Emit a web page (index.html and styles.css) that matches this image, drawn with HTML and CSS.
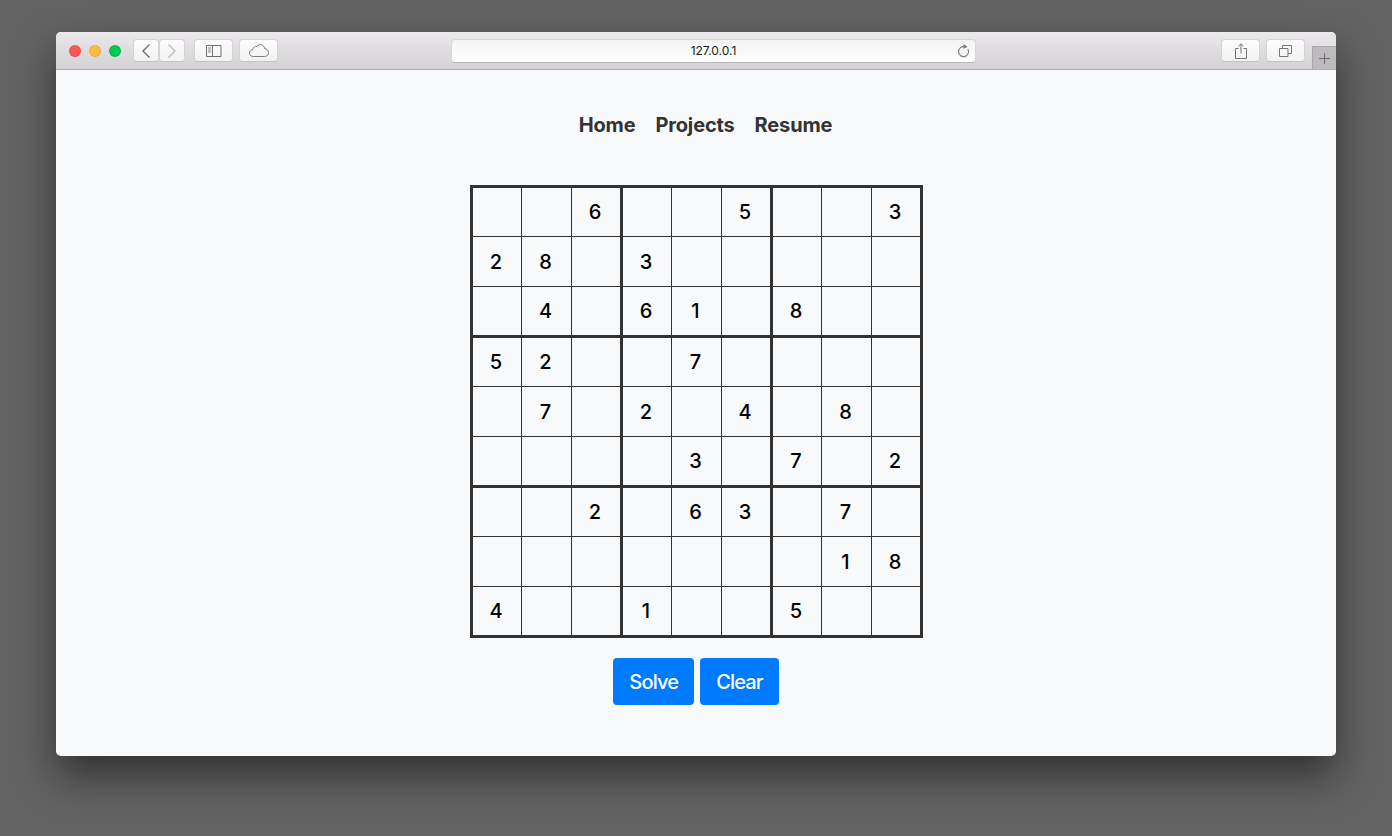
FILE: index.html
```html
<!DOCTYPE html>
<html lang="en">
<head>
  <meta charset="UTF-8" />
  <meta name="viewport" content="width=device-width, initial-scale=1" />
  <title>Sudoku Solver</title>
  <link rel="stylesheet" href="styles.css">
</head>
<body>
  <div class="window">
    <div class="titlebar">
      <div class="lights">
        <span class="light red"></span>
        <span class="light yellow"></span>
        <span class="light green"></span>
      </div>
      <div class="nav-pair">
        <span class="tool tool-nav">
          <svg width="10" height="16" viewBox="0 0 10 16"><path d="M8.500 1.500 2 8l6.500 6.500" fill="none" stroke="#6e6e6e" stroke-width="1.400"/></svg>
        </span>
        <span class="tool tool-nav">
          <svg width="10" height="16" viewBox="0 0 10 16"><path d="M1.500 1.500 8 8l-6.500 6.500" fill="none" stroke="#bdbdbd" stroke-width="1.400"/></svg>
        </span>
      </div>
      <span class="tool tool-wide sidebar-btn">
        <svg width="16" height="12" viewBox="0 0 16 12"><path d="M.5.5h14.500v11H.5zM6.500.5v11" fill="none" stroke="#6e6e6e"/><path d="M2 3h3M2 5h3M2 7h3" stroke="#8a8a8a"/></svg>
      </span>
      <span class="tool tool-wide cloud-btn">
        <svg width="20" height="13" viewBox="0 0 20 13"><path d="M4.500 12.500C2 12.500.5 11 .5 9.200c0-1.700 1.300-3 3-3.200C4 3.500 6 2 8 2.500 9.200.8 11 .2 12.700.8c1.700.6 2.700 2 2.800 3.700 2.300.3 4 2 4 4.100 0 2.200-1.700 3.900-4 3.900z" fill="none" stroke="#7a7a7a"/></svg>
      </span>
      <div class="address">
        <span class="address-text">127.0.0.1</span>
        <svg class="reload" width="13" height="14" viewBox="0 0 13 14"><path d="M10.800 5a5 5 0 1 1-3.300-2.300" fill="none" stroke="#7a7a7a" stroke-width="1.100"/><path d="M6.500 0l4 2.700-4 2.300z" fill="#7a7a7a"/></svg>
      </div>
      <span class="tool tool-right share-btn">
        <svg width="12" height="16" viewBox="0 0 12 16"><path d="M3.500 5.500H.5v10h11v-10h-3M6 10.500V1M3.500 3.200 6 .8l2.500 2.400" fill="none" stroke="#757575"/></svg>
      </span>
      <span class="tool tool-right tabs-btn">
        <svg width="13" height="12" viewBox="0 0 13 12"><path d="M.5 3.500h8.500v8H.5zM3.500 3.500V.5h9v8H9" fill="none" stroke="#757575"/></svg>
      </span>
      <span class="new-tab">
        <svg width="11" height="11" viewBox="0 0 11 11"><path d="M5.500 0v11M0 5.500h11" stroke="#6f6f6f"/></svg>
      </span>
    </div>

    <div class="content">
      <nav class="menu">
        <a href="#">Home</a>
        <a href="#">Projects</a>
        <a href="#">Resume</a>
      </nav>

      <table class="board">
        <tr><td></td><td></td><td>6</td><td></td><td></td><td>5</td><td></td><td></td><td>3</td></tr>
        <tr><td>2</td><td>8</td><td></td><td>3</td><td></td><td></td><td></td><td></td><td></td></tr>
        <tr><td></td><td>4</td><td></td><td>6</td><td>1</td><td></td><td>8</td><td></td><td></td></tr>
        <tr><td>5</td><td>2</td><td></td><td></td><td>7</td><td></td><td></td><td></td><td></td></tr>
        <tr><td></td><td>7</td><td></td><td>2</td><td></td><td>4</td><td></td><td>8</td><td></td></tr>
        <tr><td></td><td></td><td></td><td></td><td>3</td><td></td><td>7</td><td></td><td>2</td></tr>
        <tr><td></td><td></td><td>2</td><td></td><td>6</td><td>3</td><td></td><td>7</td><td></td></tr>
        <tr><td></td><td></td><td></td><td></td><td></td><td></td><td></td><td>1</td><td>8</td></tr>
        <tr><td>4</td><td></td><td></td><td>1</td><td></td><td></td><td>5</td><td></td><td></td></tr>
      </table>

      <div class="actions">
        <button type="button" class="btn">Solve</button>
        <button type="button" class="btn">Clear</button>
      </div>
    </div>
  </div>
</body>
</html>
```

FILE: styles.css
```css
/* Fondo del escritorio */
body {
  margin: 0;
  height: 836px;
  padding: 32px 56px 0;
  box-sizing: border-box;
  background-color: #636363;
  font-family: Inter, "Liberation Sans", sans-serif;
  overflow: hidden;
}

/* Ventana */
.window {
  width: 1280px;
  height: 724px;
  border-radius: 5px;
  overflow: hidden;
  background-color: #f8f9fa;
  box-shadow: 0 20px 40px rgba(0, 0, 0, 0.5);
}

.titlebar {
  position: relative;
  height: 37px;
  display: flex;
  align-items: center;
  border-bottom: 1px solid #aeacae;
  background: linear-gradient(#ebe9eb, #d3d1d3);
}

.lights {
  display: flex;
  gap: 8px;
  margin-left: 13px;
  margin-right: 12px;
}

.light {
  width: 12px;
  height: 12px;
  box-sizing: border-box;
  border-radius: 50%;
  border: 1px solid rgba(0, 0, 0, 0.08);
}

.red { background-color: #fc5753; }
.yellow { background-color: #fdbc40; }
.green { background-color: #02c84f; }

.nav-pair {
  display: flex;
  margin-right: 9px;
}

.tool {
  display: flex;
  align-items: center;
  justify-content: center;
  height: 21px;
  background: linear-gradient(#fdfdfd, #f2f2f2);
  border: 1px solid #d5d3d5;
  border-bottom-color: #c3c1c3;
  border-radius: 4px;
}

.tool-nav { width: 24px; }
.tool-wide { width: 37px; }
.sidebar-btn { margin-right: 6px; }

.address {
  position: relative;
  display: flex;
  align-items: center;
  justify-content: center;
  width: 523px;
  height: 22px;
  margin-left: 173px;
  background: linear-gradient(#f3f3f3, #ffffff);
  border: 1px solid #d8d6d8;
  border-bottom-color: #b9b7b9;
  border-radius: 4px;
}

.address-text {
  font-size: 12px;
  color: #1a1a1a;
}

.reload {
  position: absolute;
  right: 5px;
  top: 4px;
}

.tool-right { width: 37px; }
.share-btn { margin-left: 245px; }
.tabs-btn { margin-left: 6px; }

.new-tab {
  position: absolute;
  right: 0;
  bottom: 0;
  width: 24px;
  height: 23px;
  display: flex;
  align-items: center;
  justify-content: center;
  background-color: #bdbbbd;
  border-left: 1px solid #a9a7a9;
  border-top: 1px solid #a9a7a9;
  box-sizing: border-box;
}

/* Contenido */
.content {
  display: flex;
  flex-direction: column;
  align-items: center;
}

.menu {
  display: flex;
  gap: 20px;
  margin-top: 42px;
  margin-bottom: 47px;
  margin-left: 19px;
}

.menu a {
  font-size: 20px;
  line-height: 26px;
  font-weight: 700;
  letter-spacing: -0.15px;
  color: #333;
  text-decoration: none;
}

/* Tablero */
.board {
  table-layout: fixed;
  width: 453px;
  height: 453px;
  border-collapse: collapse;
  border: 3px solid #333;
}

.board td {
  box-sizing: border-box;
  height: 50px;
  padding: 0 1px 0 0;
  text-align: center;
  font-size: 20px;
  font-weight: 500;
  color: #000;
  border: 1px solid #333;
}

.board td:nth-child(3n) {
  border-right: 3px solid #333;
}

.board tr:nth-child(3n) td {
  border-bottom: 3px solid #333;
}

/* Botones */
.actions {
  display: flex;
  gap: 6px;
  margin-top: 20px;
}

.btn {
  height: 47px;
  padding: 0 16px;
  font-family: inherit;
  font-size: 20px;
  font-weight: 500;
  letter-spacing: -0.85px;
  color: #fff;
  background-color: #007bff;
  border: none;
  border-radius: 4px;
  cursor: pointer;
}
```
